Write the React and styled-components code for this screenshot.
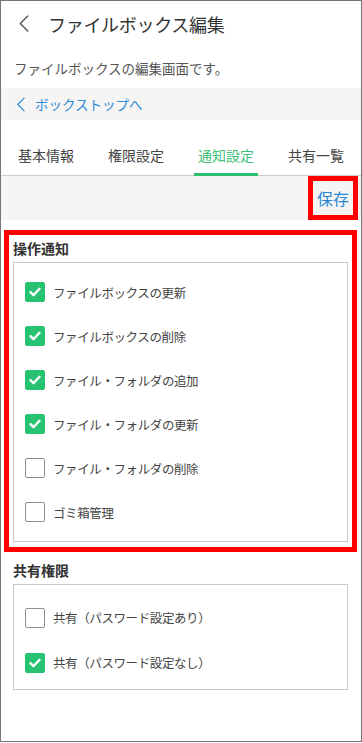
import React from 'react';
import styled, { createGlobalStyle } from 'styled-components';

const GlobalStyle = createGlobalStyle`
  html, body {
    margin: 0;
    padding: 0;
    background: #ffffff;
  }
  body {
    font-family: "Noto Sans CJK JP", "Noto Sans", sans-serif;
    color: #333333;
  }
  * {
    box-sizing: border-box;
  }
`;

const Frame = styled.div`
  width: 362px;
  height: 742px;
  border: 1px solid #767676;
  background: #ffffff;
  overflow: hidden;
`;

const Header = styled.div`
  display: flex;
  align-items: center;
  gap: 19px;
  height: 45px;
  padding-left: 17px;
`;

const Title = styled.h1`
  margin: 0;
  font-size: 18px;
  font-weight: 400;
  line-height: 24px;
  letter-spacing: -0.3px;
  color: #333333;
`;

const Description = styled.p`
  margin: 12px 0 10px;
  padding-left: 13px;
  font-size: 13.5px;
  line-height: 20px;
  color: #555555;
`;

const BackBand = styled.div`
  display: flex;
  align-items: center;
  gap: 10px;
  height: 32px;
  padding-left: 15px;
  background: #f6f5f4;
`;

const BackLink = styled.a`
  font-size: 13.5px;
  line-height: 20px;
  color: #2c8cd6;
  text-decoration: none;
`;

const TabBar = styled.div`
  display: grid;
  grid-template-columns: repeat(4, 1fr);
  height: 56px;
  border-bottom: 1px solid #cccccc;
`;

const Tab = styled.div`
  display: flex;
  justify-content: center;
  align-items: flex-end;
`;

const TabLabel = styled.span`
  padding: 0 4px 8px;
  margin-bottom: -1px;
  font-size: 14px;
  line-height: 20px;
  color: ${p => (p.$active ? '#3dbf78' : '#444444')};
  border-bottom: 3px solid ${p => (p.$active ? '#2dbd6e' : 'transparent')};
`;

const Toolbar = styled.div`
  display: flex;
  justify-content: flex-end;
  height: 44px;
  padding-right: 3px;
  background: #f6f5f4;
`;

const SaveButton = styled.button`
  display: flex;
  align-items: center;
  justify-content: center;
  width: 50px;
  height: 44px;
  padding: 0;
  border: 5px solid #ff0000;
  background: transparent;
  font-family: inherit;
  font-size: 16px;
  color: #2a86d2;
  cursor: pointer;
`;

const Section = styled.section`
  margin: ${p => (p.$first ? '10px' : '0')} 4px 0 3px;
  padding: 3px 4px ${p => (p.$highlight ? '5px' : '0')};
  border: 5px solid ${p => (p.$highlight ? '#ff0000' : 'transparent')};
`;

const SectionTitle = styled.h2`
  margin: 0 0 4px;
  font-size: 14px;
  font-weight: 700;
  line-height: 20px;
  color: #333333;
`;

const OptionBox = styled.div`
  display: flex;
  flex-direction: column;
  padding: ${p => p.$pad};
  border: 1px solid #c9c9c9;
`;

const Option = styled.label`
  display: flex;
  align-items: center;
  gap: 8px;
  height: ${p => p.$rowHeight}px;
  padding-left: 11px;
  font-size: 12.5px;
  letter-spacing: -0.4px;
  color: #444444;
  cursor: pointer;
`;

const Box = styled.span`
  display: flex;
  align-items: center;
  justify-content: center;
  width: 20px;
  height: 20px;
  border-radius: 2px;
  background: ${p => (p.$checked ? '#27c272' : '#ffffff')};
  border: 1px solid ${p => (p.$checked ? '#27c272' : '#8f8f8f')};
`;

const Chevron = ({ color, w, h }) => (
  <svg width={w} height={h} viewBox="0 0 10 16" fill="none">
    <path d="M9 1L2 8l7 7" stroke={color} strokeWidth="1.3" strokeLinecap="round" strokeLinejoin="round" />
  </svg>
);

const Check = () => (
  <svg width="12" height="10" viewBox="0 0 12 10" fill="none">
    <path d="M1.5 5.2l3 3L10.5 1.8" stroke="#ffffff" strokeWidth="2.4" strokeLinecap="round" strokeLinejoin="round" />
  </svg>
);

const Checkbox = ({ checked, label, rowHeight }) => (
  <Option $rowHeight={rowHeight}>
    <Box $checked={checked}>{checked && <Check />}</Box>
    {label}
  </Option>
);

const tabs = ['基本情報', '権限設定', '通知設定', '共有一覧'];

const operations = [
  { label: 'ファイルボックスの更新', checked: true },
  { label: 'ファイルボックスの削除', checked: true },
  { label: 'ファイル・フォルダの追加', checked: true },
  { label: 'ファイル・フォルダの更新', checked: true },
  { label: 'ファイル・フォルダの削除', checked: false },
  { label: 'ゴミ箱管理', checked: false },
];

const sharing = [
  { label: '共有（パスワード設定あり）', checked: false },
  { label: '共有（パスワード設定なし）', checked: true },
];

export default function App() {
  return (
    <>
      <GlobalStyle />
      <Frame>
        <Header>
          <Chevron color="#555555" w={11} h={17} />
          <Title>ファイルボックス編集</Title>
        </Header>
        <Description>ファイルボックスの編集画面です。</Description>
        <BackBand>
          <Chevron color="#2c8cd6" w={9} h={15} />
          <BackLink href="#">ボックストップへ</BackLink>
        </BackBand>
        <TabBar>
          {tabs.map(t => (
            <Tab key={t}>
              <TabLabel $active={t === '通知設定'}>{t}</TabLabel>
            </Tab>
          ))}
        </TabBar>
        <Toolbar>
          <SaveButton>保存</SaveButton>
        </Toolbar>
        <Section $first $highlight>
          <SectionTitle>操作通知</SectionTitle>
          <OptionBox $pad="7px 0">
            {operations.map(o => (
              <Checkbox key={o.label} {...o} rowHeight={44} />
            ))}
          </OptionBox>
        </Section>
        <Section>
          <SectionTitle>共有権限</SectionTitle>
          <OptionBox $pad="10px 0 4px">
            {sharing.map(o => (
              <Checkbox key={o.label} {...o} rowHeight={45} />
            ))}
          </OptionBox>
        </Section>
      </Frame>
    </>
  );
}
